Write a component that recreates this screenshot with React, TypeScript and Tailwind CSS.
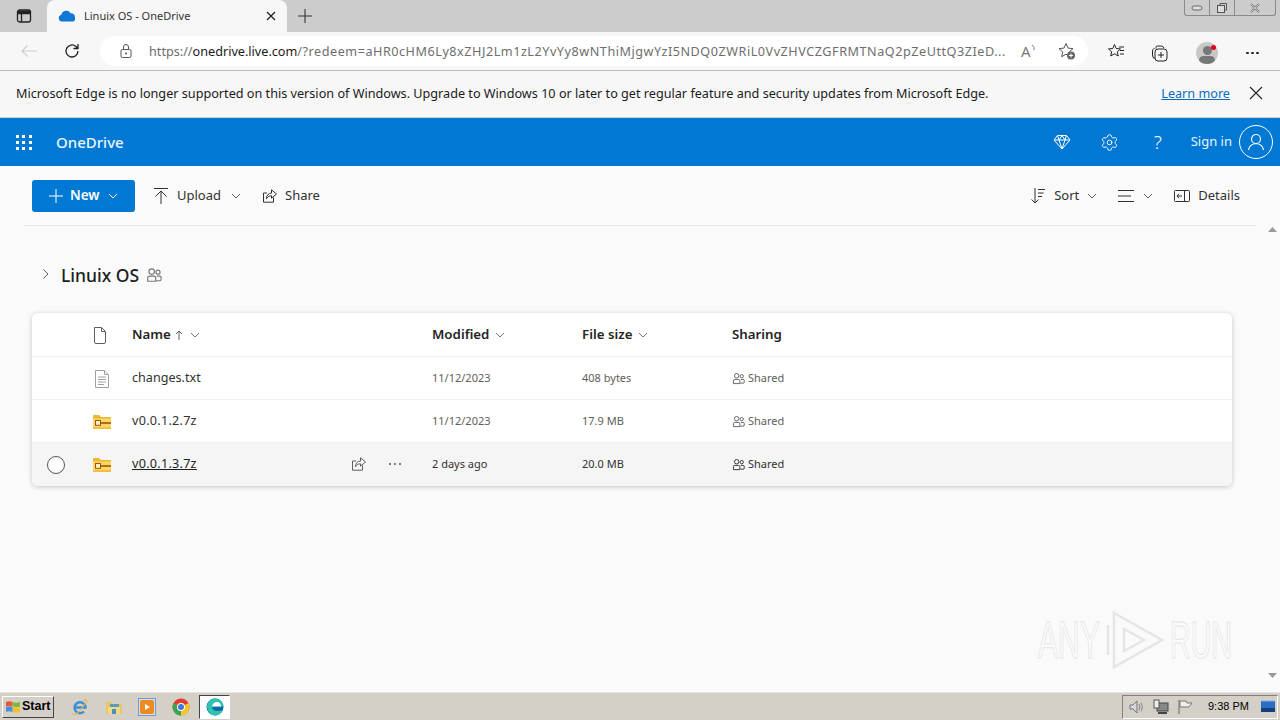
import React from "react";
import { Settings } from "lucide-react";

const S = ({ w = 16, h = 16, vb, c = "none", children, className = "" }: any) => (
  <svg width={w} height={h} viewBox={vb || `0 0 ${w} ${h}`} fill={c} className={"shrink-0 " + className}>{children}</svg>
);
const Chev = ({ color = "#605e5c", w = 10 }: any) => (
  <S w={w} h={6} vb="0 0 10 6"><path d="M1 1l4 4 4-4" stroke={color} strokeWidth="1" /></S>
);
const SharedIcon = ({ color = "#605e5c", w = 14 }: any) => (
  <S w={w} h={w} vb="0 0 14 14">
    <circle cx="5" cy="4" r="2.4" stroke={color} />
    <circle cx="10.5" cy="4.5" r="1.8" stroke={color} />
    <path d="M1.5 12.5V9.5q0-1.5 1.5-1.5h4q1.5 0 1.500 1.500v3zM9.500 8h2.500q1.200 0 1.200 1.200v1.800q0 1-1.200 1H9" stroke={color} />
  </S>
);
const ShareIcon = ({ color = "#323130" }: any) => (
  <S w={16} h={16}>
    <path d="M11.500 9.500v4.700H1.500V5h3.500" stroke={color} />
    <path d="M9.500 1.800l5 4.200-5 4.200V7.800c-2.500 0-4 1-5 3 0-3.500 2-5.700 5-5.700z" stroke={color} strokeLinejoin="round" />
  </S>
);
const ZipFolder = () => (
  <S w={20} h={16}>
    <path d="M1 2q0-1 1-1h5l2 2h9q1 0 1 1v10q0 1-1 1H2q-1 0-1-1z" fill="#e9b92f" />
    <path d="M1 4.500h18v9.500q0 1-1 1H2q-1 0-1-1z" fill="#fdd663" />
    <rect x="9" y="8.200" width="10" height="1.600" fill="#a5520a" />
    <rect x="3.500" y="6.500" width="5" height="4.800" fill="#fff0c0" stroke="#a5520a" />
    <rect x="1" y="13.500" width="18" height="1" fill="#e5ac2a" />
  </S>
);
const TxtIcon = () => (
  <S w={16} h={20}>
    <path d="M1.500 1.500h9l4 4v13h-13z" fill="#fff" stroke="#a19f9d" />
    <path d="M10.500 1.500v4h4" fill="#eee" stroke="#a19f9d" />
    <path d="M4 8h8M4 10.500h8M4 13h8M4 15.500h6" stroke="#a19f9d" />
  </S>
);

const rows = [
  { name: "changes.txt", icon: <TxtIcon />, mod: "11/12/2023", size: "408 bytes", nameCls: "" },
  { name: "v0.0.1.2.7z", icon: <ZipFolder />, mod: "11/12/2023", size: "17.9 MB", nameCls: "tracking-[0.27px]" },
  { name: "v0.0.1.3.7z", icon: <ZipFolder />, mod: "2 days ago", size: "20.0 MB", nameCls: "tracking-[0.27px] underline", sel: true },
];

const HeadCell = ({ label, w, chev = true, arrow = false }: any) => (
  <div className={"flex items-center gap-[6px] text-[13.3px] font-semibold text-[#252423] " + w}>
    <span>{label}</span>
    {arrow && <span className="-ml-[3px] font-normal text-[#605e5c]"><S w={10} h={12}><path d="M5 11V2M2 5l3-3 3 3" stroke="#605e5c" /></S></span>}
    {chev && <span><Chev color="#797775" /></span>}
  </div>
);

export default function App() {
  return (
    <div className="relative flex h-[720px] w-[1280px] flex-col overflow-hidden bg-white font-['Noto_Sans','Open_Sans',sans-serif] text-[#252423]">
      {/* Tab strip */}
      <div className="flex h-8 shrink-0 items-stretch bg-[#cccccc]">
        <div className="flex w-[47px] items-center justify-center">
          <S w={16} h={16}><rect x="1.500" y="2" width="13" height="12" rx="2" stroke="#222" strokeWidth="1.300" /><path d="M1.500 5.500h13M5.500 5.500V14" stroke="#222" strokeWidth="1.300" /><rect x="2" y="2.500" width="12" height="3" fill="#222" /></S>
        </div>
        <div className="flex w-[240px] items-center rounded-t-[8px] bg-[#f7f7f7] pl-[11px] pr-[11px]">
          <S w={18} h={12} vb="0 0 18 12"><path d="M4 11.500a3.400 3.400 0 0 1-.6-6.700A5 5 0 0 1 12.600 3.200a4 4 0 0 1 4.400 4.300 3.600 3.600 0 0 1-1.500 4z" fill="#0f78d4" /></S>
          <span className="ml-[8px] flex-1 text-[11px] text-[#333]">Linuix OS - OneDrive</span>
          <S w={10} h={10}><path d="M1 1l8 8M9 1l-8 8" stroke="#222" strokeWidth="1.300" /></S>
        </div>
        <div className="flex w-[36px] items-center justify-center">
          <S w={14} h={14}><path d="M7 0v14M0 7h14" stroke="#333" strokeWidth="1.100" /></S>
        </div>
        <div className="flex-1" />
        <div className="mr-[4px] flex h-4 w-[92px] items-stretch rounded-b-[3px] border border-t-0 border-[#8a8a8a] text-[#777]">
          <div className="flex w-[25px] items-center justify-center border-r border-[#8a8a8a]"><S w={12} h={6}><rect x="1" y="1" width="10" height="4" rx="2" fill="#e0e0e0" stroke="#666" /></S></div>
          <div className="flex w-[25px] items-center justify-center border-r border-[#8a8a8a]"><S w={12} h={12}><rect x="1.500" y="3.500" width="7" height="7" stroke="#555" fill="#ddd" /><path d="M4 3V1.500h6.500V8H9" stroke="#555" /></S></div>
          <div className="flex flex-1 items-center justify-center"><S w={12} h={10}><path d="M2 1l8 8M10 1l-8 8" stroke="#777" strokeWidth="2" /><path d="M2 1l8 8M10 1l-8 8" stroke="#eee" strokeWidth="0.700" /></S></div>
        </div>
      </div>

      {/* Address bar */}
      <div className="flex h-[39px] shrink-0 items-center border-b border-[#bdbdbd] bg-[#f7f7f7]">
        <div className="flex w-[100px] items-center pl-[20px]">
          <S w={18} h={14}><path d="M17 7H2M7.500 1.500L2 7l5.500 5.500" stroke="#d0d0d0" strokeWidth="1.200" /></S>
          <S w={18} h={18} className="ml-[25px]"><path d="M15 9a6 6 0 1 1-2-4.500L15 6.500M15 2v4.500h-4.500" stroke="#222" strokeWidth="1.300" /></S>
        </div>
        <div className="flex h-[30px] w-[988px] items-center rounded-[15px] bg-white pl-[19px]">
          <S w={14} h={16}><rect x="2" y="6.500" width="10" height="8" rx="1.500" stroke="#555" /><path d="M4.500 6.500V4a2.500 2.500 0 0 1 5 0v2.500" stroke="#555" /><circle cx="7" cy="10.500" r="1" fill="#555" /></S>
          <div className="ml-[16px] w-[858px] whitespace-nowrap text-[12.65px] leading-none text-[#6e6e6e]">https://<span className="text-[#1a1a1a]">onedrive.live.com</span><span className="tracking-[0.52px]">/?redeem=aHR0cHM6Ly8xZHJ2Lm1zL2YvYy8wNThiMjgwYzI5NDQ0ZWRiL0VvZHVCZGFRMTNaQ2pZeUttQ3ZIeD...</span></div>
          <span className="ml-[14px] flex w-[17px] items-start text-[15px] leading-none text-[#777]">A
            <S w={5} h={7} vb="0 0 5 7"><path d="M1 1q3 2 2 5" stroke="#777" /></S>
          </span>
          <S w={20} h={20} className="ml-[19px]"><path d="M9 2.500l2 4.600 5 .5-3.700 3.300 1 4.800L9 13.200l-4.300 2.500 1-4.800L2 7.600l5-.5z" stroke="#555" fill="none" /><circle cx="14" cy="14.500" r="4" fill="#666" /><path d="M12 14.500h4M14 12.500v4" stroke="#fff" /></S>
        </div>
        <div className="flex flex-1 items-center pl-[19px]">
          <S w={18} h={18}><path d="M7.500 2.500l1.700 4 4.300.4-3.200 2.900 1 4.200-3.800-2.200-3.800 2.200 1-4.200L1.500 6.900l4.300-.4z" stroke="#222" /><path d="M12 5h5M13 8.500h4M13 12h4" stroke="#222" /></S>
        </div>
      </div>

      {/* Overlay toolbar items */}
      <div className="pointer-events-none absolute left-[1151px] top-[42px] flex items-center">
        <S w={18} h={18}><path d="M5 4.500V3.500q0-1.500 1.500-1.500h3q3 0 3.500 2" stroke="#222" /><rect x="4" y="5" width="12" height="12" rx="3" stroke="#222" /><path d="M3.500 15Q1.500 13 1.500 11V7q0-1.500 2-3" stroke="#222" /><path d="M10 8v6M7 11h6" stroke="#222" /></S>
        <div className="relative ml-[27px] h-[22px] w-[22px] overflow-hidden rounded-full bg-[#c8c8c8]">
          <div className="mx-auto mt-[4px] h-[9px] w-[9px] rounded-full bg-[#777]" />
          <div className="mx-auto mt-[1px] h-[9px] w-[16px] rounded-full bg-[#777]" />
        </div>
        <div className="absolute left-[60px] top-[3px] h-[5px] w-[5px] rounded-full bg-[#e3001b]" />
        <div className="ml-[28px] flex gap-[2px]">
          <i className="h-[2.500px] w-[3px] rounded-full bg-[#222]" /><i className="h-[2.500px] w-[3px] rounded-full bg-[#222]" /><i className="h-[2.500px] w-[3px] rounded-full bg-[#222]" />
        </div>
      </div>

      {/* Info bar */}
      <div className="flex h-[47px] shrink-0 items-center border-b border-[#d0d0d0] bg-[#f7f7f7] pb-[2px] pl-4 pr-[17px] text-[12.65px] text-[#1b1b1b]">
        <span className="flex-1">Microsoft Edge is no longer supported on this version of Windows. Upgrade to Windows 10 or later to get regular feature and security updates from Microsoft Edge.</span>
        <a className="mr-[19px] text-[#0b6cbd] underline">Learn more</a>
        <S w={14} h={14}><path d="M1 1l12 12M13 1L1 13" stroke="#222" strokeWidth="1.100" /></S>
      </div>

      {/* Suite header */}
      <div className="flex h-12 shrink-0 items-center bg-[#0078d4] text-white">
        <div className="ml-4 grid w-[16px] grid-cols-3 gap-[3px]">
          {Array.from({ length: 9 }).map((_, i) => <i key={i} className="h-[3px] w-[3px] bg-white" />)}
        </div>
        <span className="ml-[24px] flex-1 text-[15px] font-medium text-[#e8f6ff]">OneDrive</span>
        <S w={18} h={16} vb="0 0 18 16"><path d="M4.500 1.500h9L17 6l-8 9-8-9zM1 6h16M6 6l3 9 3-9M4.500 1.500L6 6l3-4.500L12 6l1.500-4.500" stroke="#fff" /></S>
        <Settings size={19} strokeWidth={1.200} color="#fff" className="ml-[29px] shrink-0" />
        <span className="ml-[35px] w-[9px] text-[19px] font-light leading-none">?</span>
        <span className="ml-[28px] text-[13px] text-[#e8f6ff]">Sign in</span>
        <div className="ml-[7px] mr-[7px] flex h-[34px] w-[34px] items-center justify-center rounded-full border border-white">
          <S w={18} h={18}><circle cx="9" cy="6" r="4.500" stroke="#fff" strokeWidth="1.200" /><path d="M1.500 17q1-6 7.500-6.500Q15.500 11 16.500 17" stroke="#fff" strokeWidth="1.200" /></S>
        </div>
      </div>

      {/* Content */}
      <div className="flex min-h-0 flex-1 flex-col bg-[#fafafa]">
        <div className="mx-6 flex h-[60px] shrink-0 items-center border-b border-[#e6e6e6] pl-2 pr-4 text-[13px] text-[#323130]">
          <div className="flex h-8 w-[103px] items-center rounded-[3px] bg-[#0078d4] pl-[17px] font-semibold text-white">
            <S w={14} h={14}><path d="M7 0v14M0 7h14" stroke="#fff" /></S>
            <span className="ml-[7px] text-[13.5px]">New</span>
            <span className="ml-[8px]"><Chev color="#fff" /></span>
          </div>
          <div className="ml-[18px] flex items-center">
            <S w={16} h={18}><path d="M1 1.500h14M8 17V4M2.500 9.500L8 4l5.500 5.500" stroke="#323130" /></S>
            <span className="ml-2">Upload</span>
            <span className="ml-[10px]"><Chev /></span>
          </div>
          <div className="ml-[21px] flex items-center">
            <ShareIcon />
            <span className="ml-[7px]">Share</span>
          </div>
          <div className="flex-1" />
          <S w={16} h={18}><path d="M5 1v15M1.500 12.500L5 16l3.500-3.500M8 2.500h7M8 6h5.500M8 9.500h4" stroke="#323130" /></S>
          <span className="ml-2">Sort</span>
          <span className="ml-2"><Chev /></span>
          <S w={16} h={14} className="ml-[21px]"><path d="M0 1.500h16M0 7h13M0 12.500h16" stroke="#323130" /></S>
          <span className="ml-[9px]"><Chev /></span>
          <S w={16} h={14} className="ml-[21px]"><rect x="0.500" y="1.500" width="15" height="11" rx="1" stroke="#323130" /><path d="M10.500 1.500v11M8 7H3M5 4.800L3 7l2 2.200" stroke="#323130" /></S>
          <span className="ml-2">Details</span>
        </div>

        <div className="flex min-h-0 flex-1">
          <div className="min-w-0 flex-1 pl-8 pr-8">
            <div className="flex h-[87px] items-start pt-[36px]">
              <span className="ml-[10px] mt-[6px]"><S w={8} h={12} vb="0 0 8 12"><path d="M1.500 1.500L6 6l-4.500 4.500" stroke="#605e5c" /></S></span>
              <span className="ml-[11px] text-[17.5px] font-medium leading-[26px] text-[#201f1e]">Linuix OS</span>
              <span className="ml-[7px] mt-[5px]"><SharedIcon w={16} color="#797775" /></span>
            </div>
            <div className="w-[1200px] overflow-hidden rounded-[6px] bg-white shadow-[0_1px_5px_rgba(0,0,0,0.22)]">
              <div className="flex h-11 items-center border-b border-[#f0f0f0]">
                <div className="flex w-[100px] justify-center pl-[35px]">
                  <S w={14} h={18}><path d="M1.500 1.500h7l4 4v10.500a1.500 1.500 0 0 1-1.500 1.500H3a1.500 1.500 0 0 1-1.500-1.500zM8.500 1.500v4h4" stroke="#605e5c" /></S>
                </div>
                <HeadCell label="Name" w="w-[300px]" arrow />
                <HeadCell label="Modified" w="w-[150px]" />
                <HeadCell label="File size" w="w-[150px]" />
                <HeadCell label="Sharing" w="w-[150px]" chev={false} />
              </div>
              {rows.map((r, i) => (
                <div key={i} className={"flex h-[43px] items-center " + (r.sel ? "bg-[#f5f5f5]" : "shadow-[inset_0_-1px_0_#f0f0f0]")}>
                  <div className="flex w-[48px] justify-center">
                    {r.sel && <div className="h-[18px] w-[18px] rounded-full border border-[#555] bg-white" />}
                  </div>
                  <div className="flex w-[52px] pl-[12px]"><div className="flex w-[20px] justify-center">{r.icon}</div></div>
                  <div className={"flex w-[300px] items-center text-[12.6px] " + (r.sel ? "text-[#201f1e]" : "text-[#323130]")}>
                    <span className={r.nameCls}>{r.name}</span>
                    {r.sel && (
                      <div className="ml-[154px] flex items-center">
                        <ShareIcon color="#605e5c" />
                        <div className="ml-[22px] flex gap-[3px]">
                          <i className="h-[2px] w-[2px] rounded-full bg-[#555]" /><i className="h-[2px] w-[2px] rounded-full bg-[#555]" /><i className="h-[2px] w-[2px] rounded-full bg-[#555]" />
                        </div>
                      </div>
                    )}
                  </div>
                  <div className={"w-[150px] text-[11px] " + (r.sel ? "text-[#323130]" : "text-[#605e5c]")}>{r.mod}</div>
                  <div className={"w-[150px] text-[11px] " + (r.sel ? "text-[#323130]" : "text-[#605e5c]")}>{r.size}</div>
                  <div className={"flex w-[150px] items-center gap-[3px] text-[11px] " + (r.sel ? "text-[#323130]" : "text-[#605e5c]")}>
                    <SharedIcon w={13} color={r.sel ? "#323130" : "#605e5c"} />
                    <span>Shared</span>
                  </div>
                </div>
              ))}
            </div>
          </div>
          <div className="flex w-4 shrink-0 flex-col items-center justify-between bg-[#fbfbfb] pb-[14px] pt-[1px]">
            <S w={9} h={5}><path d="M0 5l4.500-5L9 5z" fill="#9a9a9a" /></S>
            <S w={9} h={5}><path d="M0 0l4.500 5L9 0z" fill="#9a9a9a" /></S>
          </div>
        </div>
      </div>

      {/* Taskbar */}
      <div className="flex h-7 shrink-0 items-center border-t border-[#e8e6e0] bg-[#d4d0c8]">
        <div className="ml-[2px] flex h-[22px] w-[52px] items-center border border-b-[#444] border-l-white border-r-[#444] border-t-white bg-[#d4d0c8] pl-[2px] font-['Liberation_Sans',sans-serif] text-[12.5px] font-bold text-black">
          <S w={16} h={14} vb="0 0 16 14"><path d="M1 2q3-1.500 6.500 0v4.500q-3.500-1.500-6.500 0z" fill="#e8562a" /><path d="M8 2q3 1.500 7 0v4.500q-4 1.500-7 0z" fill="#7eb83a" /><path d="M1 7q3-1.500 6.500 0v5q-3.500-1.500-6.500 0z" fill="#4a8fdc" /><path d="M8 7q3 1.500 7 0v5q-4 1.500-7 0z" fill="#f5c02c" /></S>
          <span className="ml-[1px]">Start</span>
        </div>
        <S w={18} h={18} className="ml-[17px]"><path d="M4 9.500h10.500a5.500 5.500 0 1 0-1.500 4" stroke="#3b8fd8" strokeWidth="2.500" /><path d="M1 15Q2 17 5 16T16 3Q15 1 12 2" stroke="#e8b838" strokeWidth="1.200" /></S>
        <S w={18} h={18} className="ml-[16px]"><path d="M1 4h6l1 2h9v10H1z" fill="#e8c666" /><rect x="5" y="6" width="9" height="10" fill="#5f9bb8" /><path d="M3 9h12v7H3z" fill="#f0d890" /><rect x="7" y="11" width="4" height="5" fill="#4d8fb0" /></S>
        <div className="ml-[15px] flex h-[18px] w-[18px] items-center justify-center border border-[#6e9bd0] bg-[#cfe0f2]">
          <div className="flex h-[14px] w-[14px] items-center justify-center rounded-[2px] bg-[#f08a1d]"><S w={8} h={8}><path d="M2 1l5 3-5 3z" fill="#fff" /></S></div>
        </div>
        <S w={18} h={18} className="ml-[16px]" vb="0 0 18 18"><circle cx="9" cy="9" r="8.500" fill="#e33b2e" /><path d="M9 9L16.500 5A8.500 8.500 0 0 1 9 17.500z" fill="#f7c52b" /><path d="M9 9L9 17.500A8.500 8.500 0 0 1 1.500 5z" fill="#3aa655" /><circle cx="9" cy="9" r="4" fill="#fff" /><circle cx="9" cy="9" r="3" fill="#3b78d8" /></S>
        <div className="ml-[9px] flex h-[24px] w-[31px] items-center justify-center border border-b-white border-l-[#444] border-r-white border-t-[#444] bg-white">
          <S w={18} h={18} vb="0 0 18 18"><circle cx="9" cy="9" r="8.500" fill="#0c6aa8" /><path d="M1 8C2 3 6 .5 9 .5c5 0 8.500 4 8.500 8H6c0 4 5 6 11 3.500-1.500 3.500-5 5.500-8 5.500-4 0-8-4-8-9.500z" fill="#2fc4b0" /><path d="M6 8.500c.5-3 2.500-4.500 5-4.500s4 2 4 4.500z" fill="#fff" /></S>
        </div>
        <div className="flex-1" />
        <div className="mr-[2px] flex h-[24px] w-[156px] items-center border border-b-white border-l-[#808080] border-r-white border-t-[#808080] pl-[6px]">
          <S w={16} h={16}><path d="M1 6h3l4-4v12l-4-4H1z" fill="#d8d8d8" stroke="#777" /><path d="M10 5q2 3 0 6M12 3.500q3 4.500 0 9" stroke="#888" /></S>
          <S w={16} h={16} className="ml-[8px]"><rect x="4" y="4" width="11" height="8" fill="#888" stroke="#444" /><rect x="1" y="1" width="5" height="8" fill="#eee" stroke="#555" /><path d="M5 14h9" stroke="#444" strokeWidth="2" /></S>
          <S w={16} h={16} className="ml-[8px]"><path d="M2 1v14" stroke="#666" /><path d="M3 2h6l1 2h5l-3 4H3z" fill="#eee" stroke="#777" /></S>
          <span className="ml-[15px] font-['Liberation_Sans',sans-serif] text-[11px] text-black">9:38 PM</span>
          <S w={16} h={14} className="ml-[11px]"><rect x="1" y="1" width="14" height="11" fill="#2b6fc4" /><rect x="1" y="8" width="14" height="4" fill="#163f7a" /><path d="M1 1h14" stroke="#7fb0e8" /></S>
        </div>
      </div>

      {/* Watermark */}
      <div className="pointer-events-none absolute left-[1038px] top-[610px] flex h-[60px] items-center font-['Liberation_Sans',sans-serif] text-[52px] leading-none text-[#fbfbfb] [-webkit-text-stroke:1px_#e4e4e4]">
        <span className="w-[66px] origin-left scale-x-[0.58]">ANY</span>
        <S w={66} h={62} vb="0 0 66 62"><path d="M4 16v30M10 4l48 27-48 27zM20 20l20 11-20 11z" stroke="#e6e6e6" strokeWidth="2.500" /></S>
        <span className="origin-left scale-x-[0.55]">RUN</span>
      </div>
    </div>
  );
}
